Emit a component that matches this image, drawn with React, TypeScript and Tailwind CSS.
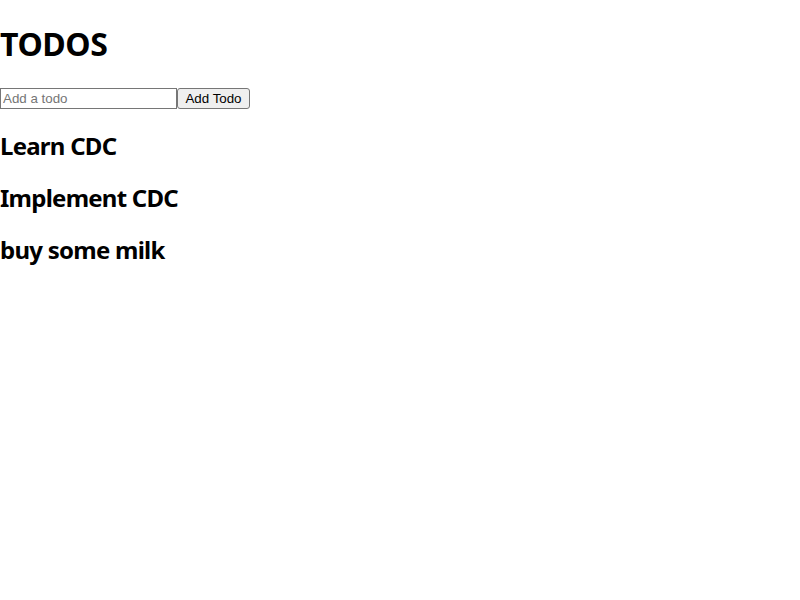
import { useState } from "react";

const initialTodos = ["Learn CDC", "Implement CDC", "buy some milk"];

export default function App() {
  const [todos, setTodos] = useState<string[]>(initialTodos);
  const [text, setText] = useState("");

  const addTodo = (e: React.FormEvent) => {
    e.preventDefault();
    if (!text.trim()) return;
    setTodos((prev) => [...prev, text.trim()]);
    setText("");
  };

  return (
    <div className="min-h-screen bg-white font-['Noto_Sans',sans-serif] text-black">
      <h1 className="my-[21.44px] pt-[4px] text-[32px] font-bold leading-[38.5px] tracking-[-0.4px]">
        TODOS
      </h1>

      <form onSubmit={addTodo} className="flex h-[23px] items-start pt-[2.5px]">
        <input
          value={text}
          onChange={(e) => setText(e.target.value)}
          placeholder="Add a todo"
          className="h-[21px] w-[177px] border border-[#767676] px-[2px] font-['Liberation_Sans',sans-serif] text-[13.33px] text-black outline-none placeholder:text-[#757575]"
        />
        <button
          type="submit"
          className="h-[21px] w-[73px] rounded-[3px] border border-[#767676] bg-[#efefef] px-[6px] font-['Liberation_Sans',sans-serif] text-[13.33px] leading-none text-black"
        >
          Add Todo
        </button>
      </form>

      {todos.map((todo, i) => (
        <h2
          key={i}
          className="my-[19.92px] pt-[4px] text-[24px] font-bold leading-[28px] tracking-[-0.75px]"
        >
          {todo}
        </h2>
      ))}
    </div>
  );
}
